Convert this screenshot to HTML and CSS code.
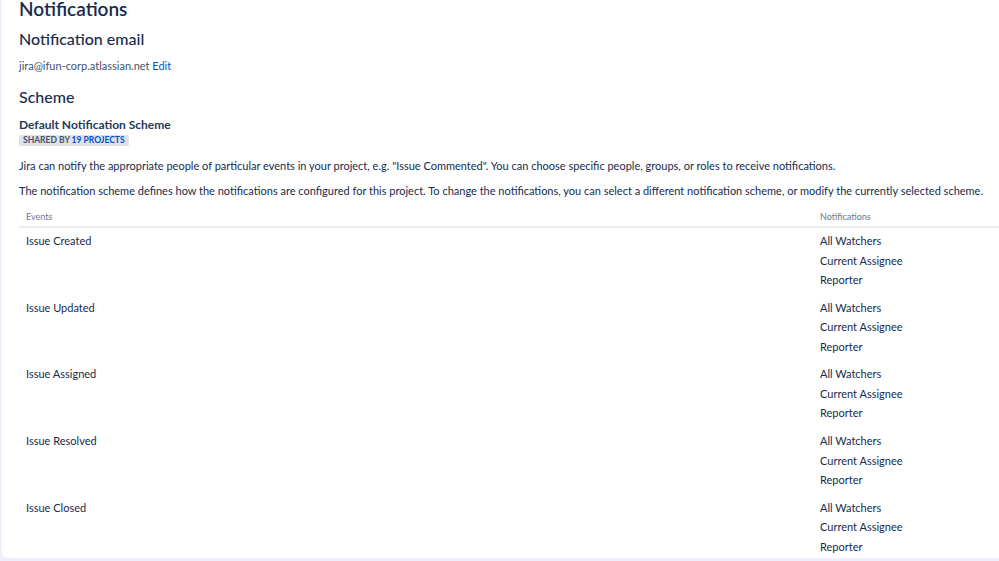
FILE: index.html
```html
<!DOCTYPE html>
<html>
<head>
<meta charset="utf-8">
<link rel="stylesheet" href="styles.css">
</head>
<body>
<div class="card">
  <h1 class="title">Notifications</h1>
  <h2 class="section">Notification email</h2>
  <p class="email">jira@ifun-corp.atlassian.net <a class="link">Edit</a></p>
  <h2 class="section scheme">Scheme</h2>
  <div class="scheme-name">Default Notification Scheme</div>
  <div class="badge-row"><span class="badge">SHARED BY <span class="badge-link">19 PROJECTS</span></span></div>
  <p class="para p1">Jira can notify the appropriate people of particular events in your project, e.g. "Issue Commented". You can choose specific people, groups, or roles to receive notifications.</p>
  <p class="para p2">The notification scheme defines how the notifications are configured for this project. To change the notifications, you can select a different notification scheme, or modify the currently selected scheme.</p>
  <div class="table">
    <div class="thead">
      <div class="th events">Events</div>
      <div class="th notes">Notifications</div>
    </div>
    <div class="row">
      <div class="cell events">Issue Created</div>
      <div class="cell notes"><div>All Watchers</div><div>Current Assignee</div><div>Reporter</div></div>
    </div>
    <div class="row">
      <div class="cell events">Issue Updated</div>
      <div class="cell notes"><div>All Watchers</div><div>Current Assignee</div><div>Reporter</div></div>
    </div>
    <div class="row">
      <div class="cell events">Issue Assigned</div>
      <div class="cell notes"><div>All Watchers</div><div>Current Assignee</div><div>Reporter</div></div>
    </div>
    <div class="row">
      <div class="cell events">Issue Resolved</div>
      <div class="cell notes"><div>All Watchers</div><div>Current Assignee</div><div>Reporter</div></div>
    </div>
    <div class="row">
      <div class="cell events">Issue Closed</div>
      <div class="cell notes"><div>All Watchers</div><div>Current Assignee</div><div>Reporter</div></div>
    </div>
  </div>
</div>
</body>
</html>
```
FILE: styles.css
```css
html, body {
  margin: 0;
  padding: 0;
  background: #efeefd;
  height: 561px;
  overflow: hidden;
}
body {
  font-family: Lato, "Noto Sans", sans-serif;
  color: #172b4d;
}
.card {
  margin-left: 2px;
  height: 558px;
  background: #fff;
  border-bottom-left-radius: 6px;
  overflow: hidden;
  padding-left: 17px;
  box-sizing: border-box;
}
.title {
  margin: 0;
  font-size: 19px;
  font-weight: 600;
  line-height: 20px;
  margin-top: -1px;
}
.section {
  margin: 0;
  font-size: 16px;
  font-weight: 500;
  line-height: 20px;
  margin-top: 10px;
}
.email {
  margin: 0;
  margin-top: 9px;
  font-size: 11px;
  line-height: 16px;
  color: #42526e;
}
.link {
  color: #0052cc;
}
.scheme {
  margin-top: 13px;
}
.scheme-name {
  margin-top: 10px;
  font-size: 12px;
  font-weight: 700;
  line-height: 15px;
  color: #253858;
}
.badge-row {
  margin-top: 3px;
  line-height: 11px;
  height: 11px;
}
.badge {
  display: inline-block;
  vertical-align: top;
  background: #dfe1e6;
  border-radius: 2px;
  padding: 0 4px;
  font-size: 8.5px;
  font-weight: 700;
  line-height: 11px;
  color: #42526e;
}
.badge-link {
  color: #0052cc;
}
.para {
  margin: 0;
  font-size: 11px;
  line-height: 16px;
  color: #172b4d;
  white-space: nowrap;
}
.p1 {
  margin-top: 12px;
}
.p2 {
  margin-top: 9px;
}
.table {
  margin-top: 8px;
  width: 990px;
}
.thead {
  display: grid;
  grid-template-columns: 794px 1fr;
  border-bottom: 2px solid #ebecf0;
  height: 19px;
  box-sizing: content-box;
}
.th {
  font-size: 9px;
  color: #6b778c;
  padding-left: 7px;
  padding-top: 1px;
  line-height: 18px;
}
.row {
  display: grid;
  grid-template-columns: 794px 1fr;
  padding-top: 3px;
  height: 66.7px;
  box-sizing: border-box;
}
.cell {
  font-size: 11px;
  color: #172b4d;
  padding-left: 7px;
  line-height: 19.5px;
}
```
